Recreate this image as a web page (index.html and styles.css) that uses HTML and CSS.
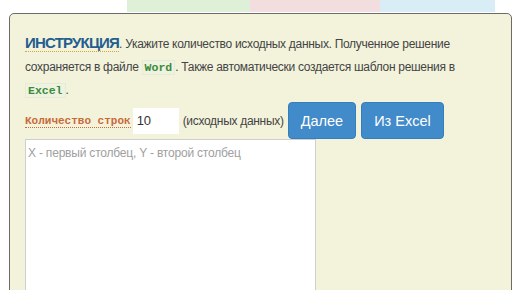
FILE: index.html
```html
<!DOCTYPE html>
<html lang="ru">
<head>
    <meta charset="UTF-8">
    <title>Инструкция</title>
    <link rel="stylesheet" href="styles.css">
</head>
<body>

    <!-- Tabs strip -->
    <div class="tabs">
        <div class="tab tab-blank"></div>
        <div class="tab tab-green"></div>
        <div class="tab tab-red"></div>
        <div class="tab tab-blue"></div>
    </div>

    <!-- Main panel -->
    <div class="panel">
        <p class="instr">
            <span class="instr-title">ИНСТРУКЦИЯ</span>. Укажите количество исходных данных. Полученное решение
            сохраняется в файле <code class="code">Word</code>. Также автоматически создается шаблон решения в
            <code class="code">Excel</code>.
        </p>

        <form class="row">
            <span class="rows-label">Количество строк</span>
            <input class="rows-input" type="text" value="10">
            <span class="rows-hint">(исходных данных)</span>
            <button class="btn" type="button">Далее</button>
            <button class="btn" type="button">Из Excel</button>
        </form>

        <textarea class="data" placeholder="X - первый столбец, Y - второй столбец"></textarea>
    </div>

</body>
</html>
```

FILE: styles.css
```css
/* General Styles */
body {
    font-family: Arial, "Liberation Sans", sans-serif;
    margin: 0;
    padding: 0;
    background-color: #ffffff;
    color: #333;
    overflow: hidden;
}

/* Tabs strip */
.tabs {
    display: flex;
    height: 12px;
}

.tab-blank {
    width: 127px;
}

.tab-green {
    width: 123px;
    background-color: #dff0d8;
}

.tab-red {
    width: 130px;
    background-color: #f2dede;
}

.tab-blue {
    width: 115px;
    background-color: #d9edf7;
}

/* Panel */
.panel {
    margin: 1px 4px 0 9px;
    padding: 17px 15px 0 15px;
    height: 300px;
    background-color: #f3f3dc;
    border: 1px solid #6b6b6b;
    border-radius: 5px;
}

.instr {
    margin: 0;
    font-size: 12px;
    letter-spacing: -0.3px;
    line-height: 23px;
    color: #444;
}

.instr-title {
    font-weight: bold;
    font-size: 15px;
    letter-spacing: -0.8px;
    color: #245e8f;
    border-bottom: 1px dotted #d9a13a;
}

.code {
    font-family: "Liberation Mono", "Courier New", monospace;
    font-size: 11.5px;
    font-weight: bold;
    letter-spacing: 0;
    color: #3b8a3b;
    background-color: #eef2e0;
    border: 1px solid #e6ead6;
    padding: 0 2px;
}

/* Controls row */
.row {
    display: flex;
    align-items: center;
    margin-top: 0;
}

.rows-label {
    font-family: "Liberation Mono", "Courier New", monospace;
    font-size: 11px;
    font-weight: bold;
    color: #c8693a;
    border-bottom: 1px dotted #c8693a;
    margin-top: 2px;
}

.rows-input {
    width: 46px;
    height: 26px;
    margin-left: 2px;
    padding: 0 4px;
    border: none;
    font-family: Arial, "Liberation Sans", sans-serif;
    font-size: 13px;
    color: #333;
    background-color: #ffffff;
    box-sizing: border-box;
}

.rows-hint {
    margin-left: 4px;
    font-size: 12px;
    letter-spacing: -0.3px;
    color: #444;
}

.btn {
    height: 37px;
    margin-left: 4px;
    padding: 0 12px;
    border: 1px solid #357ebd;
    border-radius: 4px;
    background-color: #428bca;
    color: #ffffff;
    font-family: Arial, "Liberation Sans", sans-serif;
    font-size: 14.5px;
    cursor: pointer;
}

.btn + .btn {
    margin-left: 5px;
}

/* Data textarea */
.data {
    display: block;
    width: 291px;
    height: 200px;
    margin-top: 0;
    padding: 6px 2px;
    box-sizing: border-box;
    border: 1px solid #cfcfcf;
    background-color: #ffffff;
    font-family: Arial, "Liberation Sans", sans-serif;
    font-size: 12px;
    letter-spacing: -0.2px;
    resize: none;
}

.data::placeholder {
    color: #a0a0a0;
}
```
